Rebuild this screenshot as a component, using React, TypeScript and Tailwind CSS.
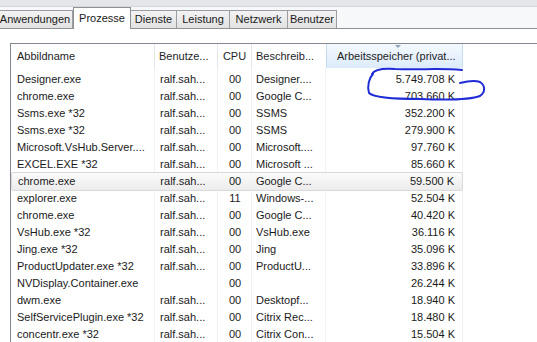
import React from "react";

// Process table data
interface Proc {
  name: string;
  user: string;
  cpu: string;
  desc: string;
  mem: string;
}

const procs: Proc[] = [
  { name: "Designer.exe", user: "ralf.sah...", cpu: "00", desc: "Designer....", mem: "5.749.708 K" },
  { name: "chrome.exe", user: "ralf.sah...", cpu: "00", desc: "Google C...", mem: "703.660 K" },
  { name: "Ssms.exe *32", user: "ralf.sah...", cpu: "00", desc: "SSMS", mem: "352.200 K" },
  { name: "Ssms.exe *32", user: "ralf.sah...", cpu: "00", desc: "SSMS", mem: "279.900 K" },
  { name: "Microsoft.VsHub.Server....", user: "ralf.sah...", cpu: "00", desc: "Microsoft....", mem: "97.760 K" },
  { name: "EXCEL.EXE *32", user: "ralf.sah...", cpu: "00", desc: "Microsoft ...", mem: "85.660 K" },
  { name: "chrome.exe", user: "ralf.sah...", cpu: "00", desc: "Google C...", mem: "59.500 K" },
  { name: "explorer.exe", user: "ralf.sah...", cpu: "11", desc: "Windows-...", mem: "52.504 K" },
  { name: "chrome.exe", user: "ralf.sah...", cpu: "00", desc: "Google C...", mem: "40.420 K" },
  { name: "VsHub.exe *32", user: "ralf.sah...", cpu: "00", desc: "VsHub.exe", mem: "36.116 K" },
  { name: "Jing.exe *32", user: "ralf.sah...", cpu: "00", desc: "Jing", mem: "35.096 K" },
  { name: "ProductUpdater.exe *32", user: "ralf.sah...", cpu: "00", desc: "ProductU...", mem: "33.896 K" },
  { name: "NVDisplay.Container.exe", user: "", cpu: "00", desc: "", mem: "26.244 K" },
  { name: "dwm.exe", user: "ralf.sah...", cpu: "00", desc: "Desktopf...", mem: "18.940 K" },
  { name: "SelfServicePlugin.exe *32", user: "ralf.sah...", cpu: "00", desc: "Citrix Rec...", mem: "18.480 K" },
  { name: "concentr.exe *32", user: "ralf.sah...", cpu: "00", desc: "Citrix Con...", mem: "15.504 K" },
];

const tabs = ["Dienste", "Leistung", "Netzwerk", "Benutzer"];

function App(): JSX.Element {
  return (
    <div
      className="relative w-[537px] h-[342px] overflow-hidden bg-white text-[11px] text-[#1a1a1a]"
      style={{ fontFamily: '"Liberation Sans", Arial, sans-serif' }}
    >
      {/* top strip */}
      <div className="h-[7px] bg-[#e4e6e9] border-b border-[#d4d6da]" />

      {/* tabs */}
      <div className="flex items-end h-[22px] border-b border-[#8e9297] bg-[#f7f8f9]">
        <div className="h-[18px] -ml-[3px] w-[76px] flex items-center justify-center border border-b-0 border-[#9a9da2] bg-linear-to-b from-[#f3f3f3] to-[#e2e2e2]">
          Anwendungen
        </div>
        <div className="h-[22px] w-[58px] -mb-px flex items-center justify-center border border-b-0 border-[#8e9297] bg-white">
          Prozesse
        </div>
        {tabs.map((t, i) => (
          <div
            key={t}
            className={
              "h-[18px] flex items-center justify-center border border-b-0 border-l-0 border-[#9a9da2] bg-linear-to-b from-[#f3f3f3] to-[#e2e2e2] " +
              (i === 0 ? "w-[46px]" : i === 1 ? "w-[53px]" : i === 2 ? "w-[58px]" : "w-[49px]")
            }
          >
            {t}
          </div>
        ))}
      </div>

      {/* list view */}
      <div className="ml-[10px] mt-[14px] border-l border-t border-[#828790] w-[540px]">
        {/* header */}
        <div className="flex h-[24px] items-stretch text-[#1e1e1e]">
          <div className="w-[144px] pl-[6px] flex items-center border-r border-[#e3e6ea]">Abbildname</div>
          <div className="w-[63px] pl-[4px] flex items-center border-r border-[#e3e6ea]">Benutze...</div>
          <div className="w-[34px] flex items-center justify-center border-r border-[#e3e6ea]">CPU</div>
          <div className="w-[74px] pl-[4px] flex items-center">Beschreib...</div>
          <div className="relative w-[137px] pl-[10px] flex items-center border-x border-[#c5dcf2] bg-linear-to-b from-[#f4f9fe] to-[#dcebfb]">
            Arbeitsspeicher (privat...
            <span className="absolute left-[68px] top-[1px] w-0 h-0 border-x-[3px] border-x-transparent border-t-[3px] border-t-[#8fa3b8]" />
          </div>
          <div className="flex-1" />
        </div>

        {/* rows */}
        <div className="relative pt-[3px]">
          {/* faint column lines */}
          <div className="absolute inset-0 flex pointer-events-none">
            <div className="w-[144px] border-r border-[#f1f2f4]" />
            <div className="w-[63px] border-r border-[#f1f2f4]" />
            <div className="w-[34px] border-r border-[#f1f2f4]" />
            <div className="w-[74px] border-r border-[#f1f2f4]" />
            <div className="w-[137px] border-r border-[#f1f2f4]" />
          </div>
          {procs.map((p, i) => (
            <div
              key={i}
              className={
                "relative flex h-[17px] items-center " +
                (i === 6
                  ? "border border-[#d9d9d9] rounded-[2px] bg-linear-to-b from-[#fbfbfb] to-[#ececec] w-[452px] -my-px h-[19px]"
                  : "")
              }
            >
              <div className="w-[144px] pl-[6px] whitespace-nowrap">{p.name}</div>
              <div className="w-[63px] pl-[5px] whitespace-nowrap">{p.user}</div>
              <div className="w-[34px] text-center">{p.cpu}</div>
              <div className="w-[74px] pl-[4px] whitespace-nowrap">{p.desc}</div>
              <div className="w-[137px] pr-[8px] text-right whitespace-nowrap">{p.mem}</div>
            </div>
          ))}
        </div>
      </div>

      {/* hand drawn annotation */}
      <svg
        className="absolute left-0 top-0 pointer-events-none"
        width="537"
        height="342"
        viewBox="0 0 537 342"
      >
        <path
          d="M372 74 C374 70 380 68 395 69 C420 70 440 68 462 70"
          fill="none"
          stroke="#1f2bd6"
          strokeWidth="2"
          strokeLinecap="round"
        />
        <path
          d="M373 74 C369 78 367 86 369 93 C374 98 395 99 420 99 C445 100 470 100 480 96 C486 92 485 85 480 82 C475 80 468 81 460 83"
          fill="none"
          stroke="#1f2bd6"
          strokeWidth="2"
          strokeLinecap="round"
        />
      </svg>
    </div>
  );
}

export default App;
